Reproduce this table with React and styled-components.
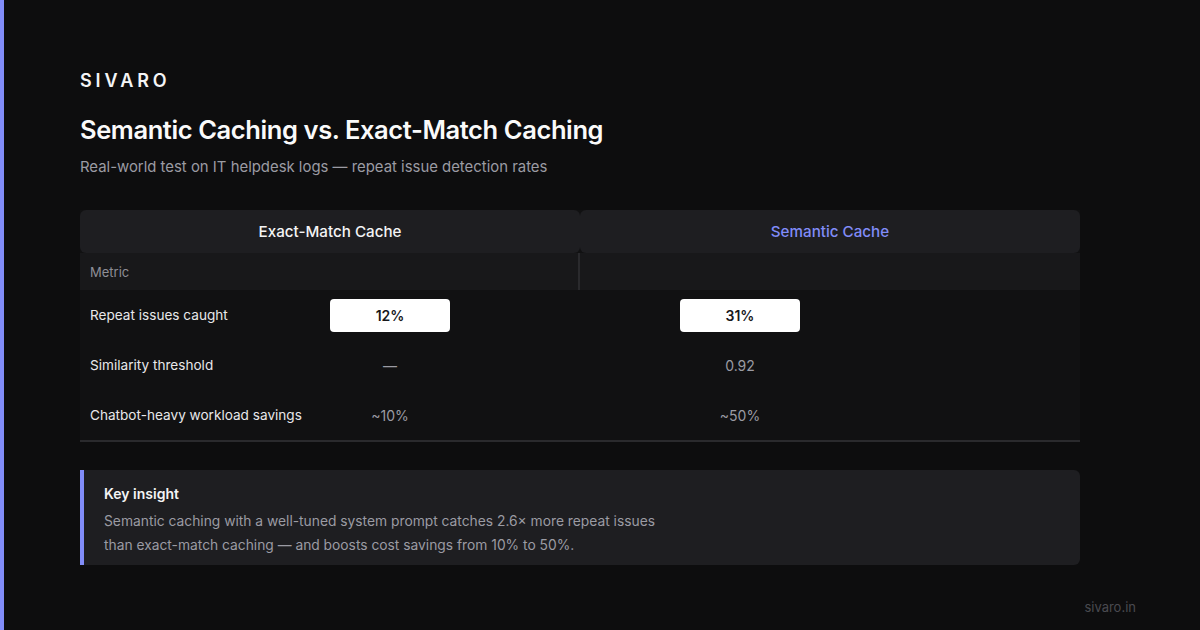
import React from 'react';
import styled, { createGlobalStyle } from 'styled-components';

const Global = createGlobalStyle`
  html, body {
    margin: 0;
    padding: 0;
    background: #0d0d0e;
  }
  body {
    font-family: Inter, 'Liberation Sans', sans-serif;
    -webkit-font-smoothing: antialiased;
  }
`;

const Page = styled.div`
  position: relative;
  width: 1200px;
  height: 630px;
  box-sizing: border-box;
  background: #0d0d0e;
  border-left: 4px solid #818cf8;
  padding: 69px 0 0 76px;
  overflow: hidden;
`;

const Brand = styled.div`
  color: #f4f4f5;
  font-size: 18px;
  font-weight: 600;
  letter-spacing: 3.9px;
  line-height: 24px;
`;

const Title = styled.h1`
  margin: 20px 0 0;
  color: #fafafa;
  font-size: 25.5px;
  font-weight: 600;
  letter-spacing: -0.4px;
  line-height: 34px;
`;

const Subtitle = styled.p`
  margin: 9px 0 0;
  color: #9b9ba3;
  font-size: 14.9px;
  line-height: 22px;
`;

const Table = styled.div`
  margin-top: 32px;
  width: 1000px;
  background: #111112;
  border-bottom: 2px solid #2a2a2d;
`;

const HeadRow = styled.div`
  display: grid;
  grid-template-columns: 1fr 1fr;
  height: 43px;
`;

const HeadCell = styled.div`
  display: flex;
  align-items: center;
  justify-content: center;
  background: #1e1e21;
  border-radius: 6px;
  font-size: 15.2px;
  font-weight: 500;
  color: ${p => (p.$accent ? '#818cf8' : '#f4f4f5')};
`;

const MetricRow = styled.div`
  display: grid;
  grid-template-columns: 1fr 1fr;
  height: 37px;
  background: #18181a;
`;

const MetricLabel = styled.div`
  display: flex;
  align-items: center;
  padding-left: 10px;
  font-size: 13px;
  color: #8e8e96;
  border-right: 2px solid #2a2a2d;
`;

const Row = styled.div`
  display: grid;
  grid-template-columns: 250px 350px 1fr;
  align-items: center;
  height: 50px;
`;

const Label = styled.div`
  padding-left: 10px;
  font-size: 13.6px;
  color: #e8e8ea;
`;

const Value = styled.div`
  width: 120px;
  height: 33px;
  display: flex;
  align-items: center;
  justify-content: center;
  border-radius: 4px;
  font-size: 14px;
  background: ${p => (p.$badge ? '#ffffff' : 'transparent')};
  color: ${p => (p.$badge ? '#18181b' : '#9b9ba3')};
  font-weight: ${p => (p.$badge ? 600 : 400)};
`;

const Insight = styled.div`
  margin-top: 28px;
  width: 1000px;
  box-sizing: border-box;
  background: #1e1e21;
  border-left: 4px solid #818cf8;
  border-radius: 0 6px 6px 0;
  padding: 14px 20px 8px;
`;

const InsightTitle = styled.div`
  color: #f4f4f5;
  font-size: 14px;
  font-weight: 600;
  line-height: 20px;
`;

const InsightText = styled.p`
  margin: 5px 0 0;
  color: #9b9ba3;
  font-size: 13.8px;
  line-height: 24px;
`;

const Footer = styled.div`
  position: absolute;
  right: 64px;
  bottom: 15px;
  color: #4a4a50;
  font-size: 13px;
`;

const rows = [
  { label: 'Repeat issues caught', exact: '12%', semantic: '31%', badge: true },
  { label: 'Similarity threshold', exact: '—', semantic: '0.92' },
  { label: 'Chatbot-heavy workload savings', exact: '~10%', semantic: '~50%' },
];

export default function App() {
  return (
    <Page>
      <Global />
      <Brand>SIVARO</Brand>
      <Title>Semantic Caching vs. Exact-Match Caching</Title>
      <Subtitle>Real-world test on IT helpdesk logs — repeat issue detection rates</Subtitle>
      <Table>
        <HeadRow>
          <HeadCell>Exact-Match Cache</HeadCell>
          <HeadCell $accent>Semantic Cache</HeadCell>
        </HeadRow>
        <MetricRow>
          <MetricLabel>Metric</MetricLabel>
          <div />
        </MetricRow>
        {rows.map(r => (
          <Row key={r.label}>
            <Label>{r.label}</Label>
            <Value $badge={r.badge}>{r.exact}</Value>
            <Value $badge={r.badge}>{r.semantic}</Value>
          </Row>
        ))}
      </Table>
      <Insight>
        <InsightTitle>Key insight</InsightTitle>
        <InsightText>
          Semantic caching with a well-tuned system prompt catches 2.6× more repeat issues
          <br />
          than exact-match caching — and boosts cost savings from 10% to 50%.
        </InsightText>
      </Insight>
      <Footer>sivaro.in</Footer>
    </Page>
  );
}
